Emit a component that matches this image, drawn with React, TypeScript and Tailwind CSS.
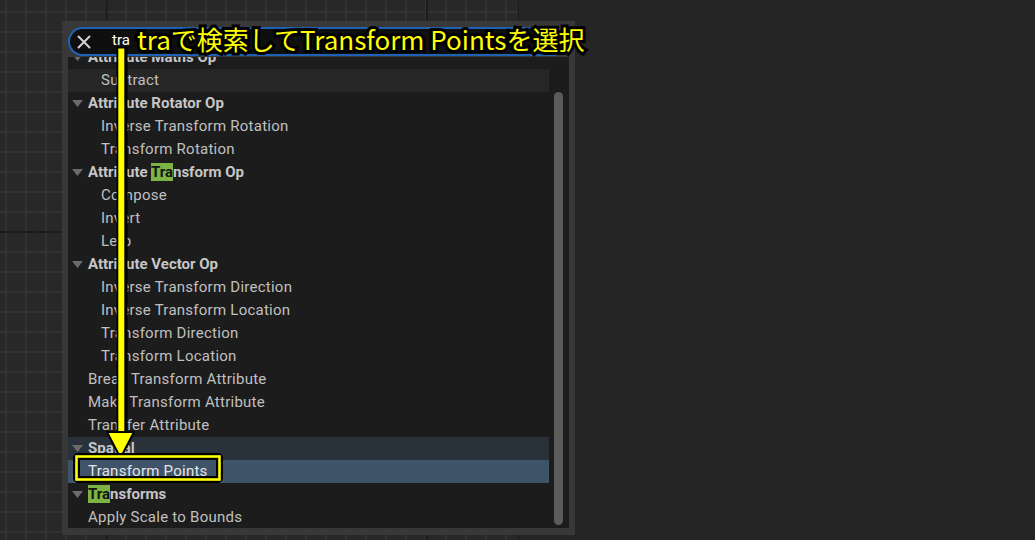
import React from "react";

type Row = {
  label: string;
  kind: "cat" | "item" | "top";
  hl?: [number, number];
  state?: "hover" | "spatial" | "selected";
};

const rows: Row[] = [
  { label: "Attribute Maths Op", kind: "cat" },
  { label: "Subtract", kind: "item", state: "hover" },
  { label: "Attribute Rotator Op", kind: "cat" },
  { label: "Inverse Transform Rotation", kind: "item" },
  { label: "Transform Rotation", kind: "item" },
  { label: "Attribute Transform Op", kind: "cat", hl: [10, 13] },
  { label: "Compose", kind: "item" },
  { label: "Invert", kind: "item" },
  { label: "Lerp", kind: "item" },
  { label: "Attribute Vector Op", kind: "cat" },
  { label: "Inverse Transform Direction", kind: "item" },
  { label: "Inverse Transform Location", kind: "item" },
  { label: "Transform Direction", kind: "item" },
  { label: "Transform Location", kind: "item" },
  { label: "Break Transform Attribute", kind: "top" },
  { label: "Make Transform Attribute", kind: "top" },
  { label: "Transfer Attribute", kind: "top" },
  { label: "Spatial", kind: "cat", state: "spatial" },
  { label: "Transform Points", kind: "top", state: "selected" },
  { label: "Transforms", kind: "cat", hl: [0, 3] },
  { label: "Apply Scale to Bounds", kind: "top" },
];

const rowBg = {
  hover: "bg-[#262626]",
  spatial: "bg-[#29313a]",
  selected: "bg-[#3f5469]",
};

function Label({ row }: { row: Row }) {
  if (!row.hl) return <>{row.label}</>;
  const [a, b] = row.hl;
  return (
    <>
      {row.label.slice(0, a)}
      <span className="bg-[#7cb342] text-[#141414]">{row.label.slice(a, b)}</span>
      {row.label.slice(b)}
    </>
  );
}

function GridCanvas() {
  return (
    <svg width="518" height="540" className="block">
      <defs>
        <pattern id="minor" x="5" y="11" width="20" height="20" patternUnits="userSpaceOnUse">
          <rect width="20" height="20" fill="#282828" />
          <rect x="0" y="0" width="2" height="20" fill="#323232" />
          <rect x="0" y="0" width="20" height="2" fill="#323232" />
        </pattern>
      </defs>
      <rect width="518" height="540" fill="url(#minor)" />
      <rect x="105.5" y="0" width="2" height="540" fill="#1c1c1c" />
      <rect x="426" y="0" width="2" height="540" fill="#1c1c1c" />
      <rect x="0" y="231" width="518" height="2" fill="#1c1c1c" />
    </svg>
  );
}

export default function App() {
  return (
    <div className="relative w-[1035px] h-[540px] overflow-hidden bg-[#252525] font-['Roboto',sans-serif]">
      {/* node graph canvas */}
      <div className="flex h-full">
        <GridCanvas />
        <div className="w-px bg-[#1b1b1b]" />
        <div className="flex-1 bg-[#252525]" />
      </div>

      {/* search popup */}
      <div className="absolute left-[62px] top-[21px] w-[513px] h-[514px] bg-[#383838] px-[6px] pt-[6px] pb-[7px] flex flex-col">
        <div className="h-[29px] w-[499px] mb-px rounded-full border-2 border-[#1d62b5] bg-[#0f0f0f] flex items-center pl-[6px]">
          <svg width="16" height="16" viewBox="0 0 16 16">
            <path d="M2.5 2.5 L13.5 13.5 M13.5 2.5 L2.5 13.5" stroke="#d2d2d2" strokeWidth="2" strokeLinecap="round" />
          </svg>
          <span className="ml-[20px] text-[15px] text-white leading-none -mt-[2px]">tra</span>
        </div>

        <div className="flex-1 bg-[#1c1c1c] overflow-hidden flex">
          <div className="w-[481px] -mt-[11px]">
            {rows.map((row) => (
              <div
                key={row.label}
                className={`h-[23px] flex items-center text-[15px] whitespace-nowrap ${
                  row.state ? rowBg[row.state] : ""
                } ${
                  row.kind === "cat"
                    ? "pl-[4px] font-bold text-[#c6c6c6]"
                    : row.kind === "item"
                    ? "pl-[33px] tracking-[0.25px] text-[#c0c0c0]"
                    : "pl-[20px] tracking-[0.25px] text-[#c0c0c0]"
                } ${row.state === "selected" ? "text-[#e4e4e4]" : ""}`}
              >
                {row.kind === "cat" && (
                  <svg width="11" height="7" viewBox="0 0 11 7" className="mr-[5px] shrink-0">
                    <path d="M0 0 L11 0 L5.5 7 Z" fill="#6b6b6b" />
                  </svg>
                )}
                <span className="leading-[17px]">
                  <Label row={row} />
                </span>
              </div>
            ))}
          </div>
          <div className="flex-1 pl-[5px] pt-[35px] pb-[3px] flex">
            <div className="w-[9px] h-full rounded-full bg-[#5b5b5b]" />
          </div>
        </div>
      </div>

      {/* annotation: arrow and frame */}
      <svg width="1035" height="540" className="absolute left-0 top-0 pointer-events-none">
        <rect x="116.5" y="47" width="11" height="388" fill="#000" />
        <rect x="118.3" y="48.5" width="6" height="386" fill="#ffff00" />
        <polygon points="107,432 134,432 120.5,458" fill="#ffff00" stroke="#000" strokeWidth="2" strokeLinejoin="round" />
        <rect x="76.5" y="456.5" width="143" height="23" fill="none" stroke="#000" strokeWidth="7" rx="1.5" />
        <rect x="76.5" y="456.5" width="143" height="23" fill="none" stroke="#ffff00" strokeWidth="2.6" />
      </svg>

      {/* annotation: caption */}
      <div className="absolute left-[137px] top-[21px] text-[26px] leading-[36px] text-[#ffff00] whitespace-nowrap font-['Noto_Sans_CJK_JP',sans-serif] [-webkit-text-stroke:6px_#000] [paint-order:stroke_fill]">
        traで検索してTransform Pointsを選択
      </div>
    </div>
  );
}
